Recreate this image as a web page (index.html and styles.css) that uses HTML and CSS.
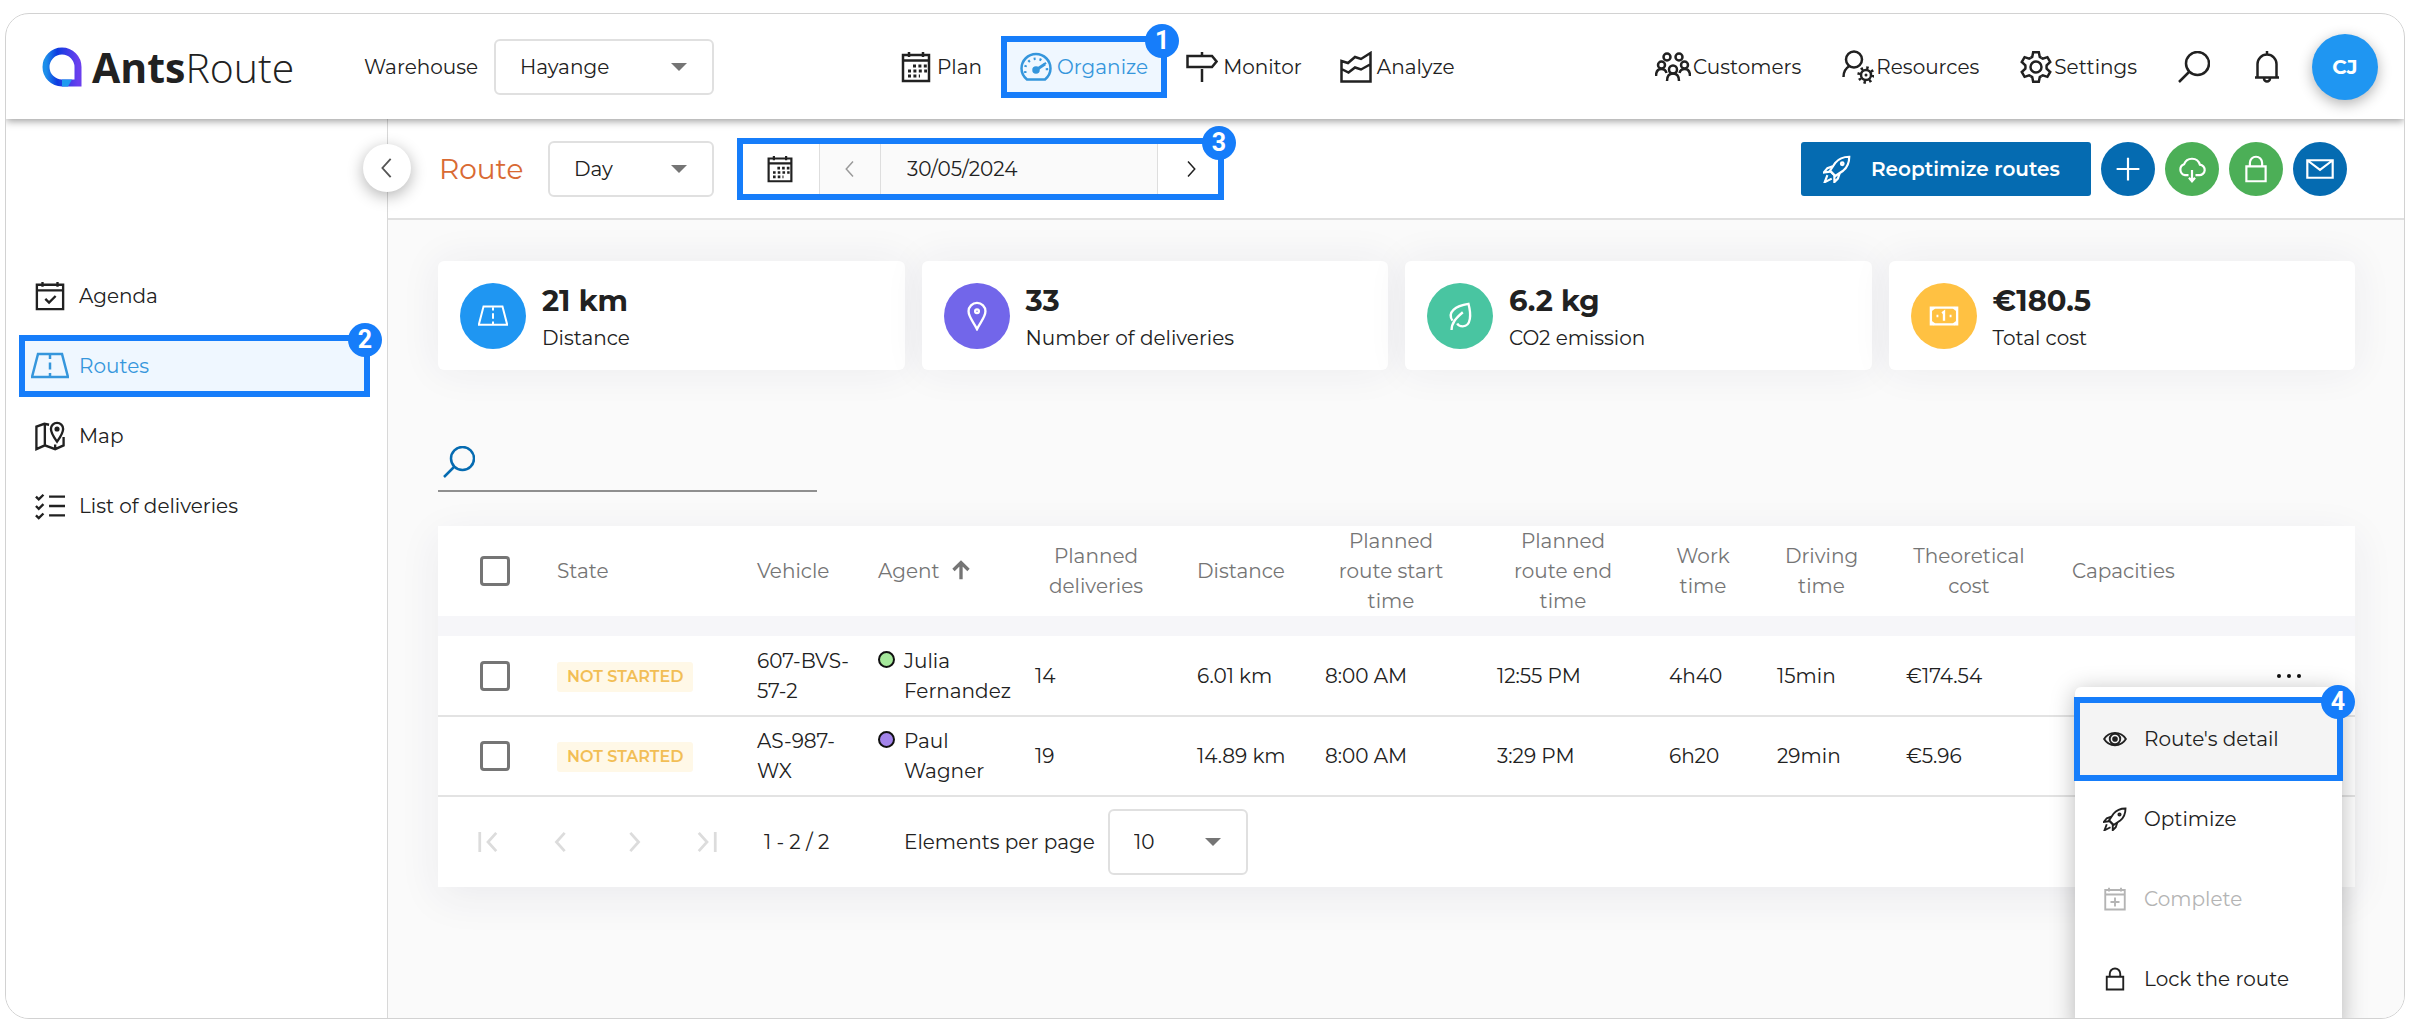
FILE: index.html
```html
<!DOCTYPE html>
<html lang="en">
<head>
    <meta charset="UTF-8">
    <meta name="viewport" content="width=device-width, initial-scale=1.0">
    <title>AntsRoute - Routes</title>
    <link rel="stylesheet" href="styles.css">
</head>
<body>
    <!-- Icon set -->
    <svg class="sprite" aria-hidden="true">
        <symbol id="i-calendar" viewBox="0 0 32 32">
            <path d="M3 4h26v26H3zM3 9.500h26M9 1v5M23 1v5"/>
            <path d="M13 15h14M8 20h19M8 25h12" stroke-width="3" stroke-dasharray="3 2.4"/>
        </symbol>
        <symbol id="i-gauge" viewBox="0 0 32 32">
            <path d="M7 28.500h18C28 26 30.500 22 30.500 17.500a14.500 14.500 0 0 0-29 0C1.500 22 4 26 7 28.500z"/>
            <path d="M5.500 22a11 11 0 1 1 21 0" stroke-dasharray="2 4"/>
            <circle cx="16" cy="19" r="2.500" fill="currentColor"/>
            <path d="M16 19l9-6" stroke-width="3"/>
        </symbol>
        <symbol id="i-sign" viewBox="0 0 32 32">
            <path d="M1.500 5H26l4.500 5.500L26 16H1.500zM16 1v4M16 18v13"/>
        </symbol>
        <symbol id="i-chart" viewBox="0 0 32 32">
            <path d="M1.500 30.500V10L8 12l7-6 6 2 9.500-6v28.500zM1.500 18l7 3.500 6.500-5 6 2 9-5"/>
        </symbol>
        <symbol id="i-group" viewBox="0 0 36 32">
            <circle cx="12" cy="6" r="3.500"/><circle cx="24" cy="6" r="3.500"/>
            <circle cx="6.500" cy="14" r="3.500"/><circle cx="29.500" cy="14" r="3.500"/>
            <circle cx="18" cy="18.500" r="4"/>
            <path d="M1 25c0-5 2-7 5.500-7s4.500 2 5 4M35 25c0-5-2-7-5.500-7s-4.500 2-5 4M12 30c0-5 2-7.500 6-7.500s6 2.500 6 7.500"/>
        </symbol>
        <symbol id="i-user" viewBox="0 0 32 34">
            <circle cx="12" cy="9.500" r="8"/>
            <path d="M1.500 27c0-5 2.500-9 6-11"/>
            <circle cx="24" cy="25" r="5"/>
            <circle cx="24" cy="25" r="7.200" stroke-width="3" stroke-dasharray="2.400 3.255"/>
            <circle cx="24" cy="25" r="1.500" fill="currentColor" stroke="none"/>
        </symbol>
        <symbol id="i-gear" viewBox="0 0 32 32">
            <path id="tooth" d="M10.700 6.900L12.200 5.900 13.200 1.200H18.800L19.800 5.900 21.300 6.900"/>
            <use href="#tooth" transform="rotate(60 16 16)"/>
            <use href="#tooth" transform="rotate(120 16 16)"/>
            <use href="#tooth" transform="rotate(180 16 16)"/>
            <use href="#tooth" transform="rotate(240 16 16)"/>
            <use href="#tooth" transform="rotate(300 16 16)"/>
            <circle cx="16" cy="16" r="5.500"/>
        </symbol>
        <symbol id="i-search" viewBox="0 0 32 32">
            <circle cx="19.500" cy="12.500" r="11.500"/>
            <path d="M11.500 20.500L1 31"/>
        </symbol>
        <symbol id="i-bell" viewBox="0 0 32 32">
            <path d="M4 26.500h24M6.500 26V13a9.500 9.500 0 0 1 19 0v13M16 0v4M13 27.500a3 3 0 0 0 6 0"/>
        </symbol>
        <symbol id="i-rocket" viewBox="0 0 32 32">
            <path d="M30 2c-7 0-12 2-16 7l-6 9 6 6 9-6c5-4 7-9 7-16z"/>
            <path d="M11 13l-6 2-4 5 7-1M19 21l-2 6-4 4v-7M5 23l-3 8 8-4M8 18l6 6"/>
            <circle cx="22" cy="10" r="1.500"/>
        </symbol>
        <symbol id="i-plus" viewBox="0 0 32 32"><path d="M16 3v26M3 16h26"/></symbol>
        <symbol id="i-cloud" viewBox="0 0 32 32">
            <path d="M12 23H8a6.500 6.500 0 0 1-1-12.500A9.500 9.500 0 0 1 25 11a6 6 0 0 1-1 12h-4M16 17v12M12.500 26l3.500 4 3.500-4"/>
        </symbol>
        <symbol id="i-lock" viewBox="0 0 32 32">
            <path d="M5 13h22v17H5zM9 13V9a7 7 0 0 1 14 0v4"/>
        </symbol>
        <symbol id="i-mail" viewBox="0 0 32 32">
            <path d="M1.500 6h29v20h-29zM1.500 6L16 17 30.500 6"/>
        </symbol>
        <symbol id="i-agenda" viewBox="0 0 32 32">
            <path d="M2 4h28v26H2zM2 10h28M8 1v5M24 1v5M11 19l4 4 7-7"/>
        </symbol>
        <symbol id="i-complete" viewBox="0 0 32 32">
            <path d="M3 4h26v26H3zM3 10h26M8 1v5M24 1v5M16 14v12M10 20h12"/>
        </symbol>
        <symbol id="i-road" viewBox="0 0 38 32">
            <path d="M7 4h24l6 23H1z"/>
            <path d="M19 5v4M19 12.500v7M19 23v3"/>
        </symbol>
        <symbol id="i-map" viewBox="0 0 32 32">
            <path d="M15 4L10 3 1.500 6v24l9-4 11 4 9-4V17M10.500 4v22M21.500 25v5"/>
            <path d="M23.500 22C20 17 17 13 17 8.500a6.500 6.500 0 0 1 13 0C30 13 27 17 23.500 22z"/>
            <circle cx="23.500" cy="8.500" r="1.500" fill="currentColor"/>
        </symbol>
        <symbol id="i-list" viewBox="0 0 32 32">
            <path d="M15 6h17M15 16h17M15 26h17M1 6l3 3 5-5M1 16l3 3 5-5M1 26l3 3 5-5"/>
        </symbol>
        <symbol id="i-pin" viewBox="0 0 32 32">
            <path d="M16 30C12 22 7 17 7 11a9 9 0 0 1 18 0c0 6-5 11-9 19z"/>
            <circle cx="16" cy="11" r="2"/>
        </symbol>
        <symbol id="i-leaf" viewBox="0 0 32 32">
            <path d="M8 21C2 12 11 5 25 3c3 11 3 24-6 24-3 0-5-1-6-3M7 31c0-8 5-13 12-19"/>
        </symbol>
        <symbol id="i-note" viewBox="0 0 32 32">
            <path d="M2 7h28v18H2z"/>
            <path d="M6 7l-4 3M26 7l4 3M6 25l-4-3M26 25l4-3M14 13l2-1.500V21M8 16h2M22 16h2"/>
        </symbol>
        <symbol id="i-eye" viewBox="0 0 32 32">
            <path d="M1.500 16C8 5 24 5 30.500 16 24 27 8 27 1.500 16z"/>
            <circle cx="16" cy="16" r="7"/>
            <circle cx="16" cy="16" r="2.500" fill="currentColor"/>
        </symbol>
        <symbol id="i-prev" viewBox="0 0 24 24"><path d="M16 2L7 12l9 10"/></symbol>
        <symbol id="i-next" viewBox="0 0 24 24"><path d="M8 2l9 10-9 10"/></symbol>
        <symbol id="i-first" viewBox="0 0 24 24"><path d="M3 1v22M21 2l-9 10 9 10"/></symbol>
        <symbol id="i-last" viewBox="0 0 24 24"><path d="M21 1v22M3 2l9 10-9 10"/></symbol>
        <symbol id="i-up" viewBox="0 0 24 24"><path d="M12 23V3M3 12l9-9 9 9"/></symbol>
    </svg>

    <div class="app">
        <header class="topbar">
            <a class="brand" href="#">
                <svg class="brand-mark" viewBox="0 0 40 40">
                    <defs>
                        <linearGradient id="brand-fill" x1="0" y1="0" x2="1" y2="0">
                            <stop offset="0" stop-color="#1d8fea"/>
                            <stop offset="0.35" stop-color="#0d3be0"/>
                            <stop offset="1" stop-color="#6a3fee"/>
                        </linearGradient>
                    </defs>
                    <path d="M36 36H20A16 16 0 1 1 36 20z" fill="none" stroke="url(#brand-fill)" stroke-width="7"/>
                    <path d="M20 39.500V32.500H30L26 39.500z" fill="#1f9bf0"/>
                </svg>
                <span class="brand-name"><b>Ants</b>Route</span>
            </a>

            <label class="warehouse-label" for="warehouse">Warehouse</label>
            <div class="select select-warehouse">
                <select id="warehouse"><option>Hayange</option></select>
            </div>

            <nav class="main-nav">
                <a href="#"><svg class="icon"><use href="#i-calendar"/></svg>Plan</a>
                <a href="#" class="active"><svg class="icon"><use href="#i-gauge"/></svg>Organize<span class="callout"><span class="badge">1</span></span></a>
                <a href="#"><svg class="icon"><use href="#i-sign"/></svg>Monitor</a>
                <a href="#"><svg class="icon"><use href="#i-chart"/></svg>Analyze</a>
            </nav>

            <div class="user-nav">
                <a href="#"><svg class="icon icon-wide"><use href="#i-group"/></svg>Customers</a>
                <a href="#"><svg class="icon icon-tall"><use href="#i-user"/></svg>Resources</a>
                <a href="#"><svg class="icon"><use href="#i-gear"/></svg>Settings</a>
                <button type="button" aria-label="Search"><svg class="icon"><use href="#i-search"/></svg></button>
                <button type="button" aria-label="Notifications"><svg class="icon"><use href="#i-bell"/></svg></button>
                <button type="button" class="avatar">CJ</button>
            </div>
        </header>

        <div class="body">
            <aside class="sidebar">
                <button type="button" class="collapse" aria-label="Collapse menu"><svg class="icon icon-small"><use href="#i-prev"/></svg></button>
                <a href="#"><svg class="icon"><use href="#i-agenda"/></svg>Agenda</a>
                <a href="#" class="active"><svg class="icon icon-road"><use href="#i-road"/></svg>Routes<span class="callout"><span class="badge">2</span></span></a>
                <a href="#"><svg class="icon"><use href="#i-map"/></svg>Map</a>
                <a href="#"><svg class="icon"><use href="#i-list"/></svg>List of deliveries</a>
            </aside>

            <main class="main">
                <div class="toolbar">
                    <h1>Route</h1>
                    <div class="select select-period">
                        <select aria-label="Period"><option>Day</option></select>
                    </div>
                    <div class="date-picker">
                        <button type="button" aria-label="Open calendar"><svg class="icon"><use href="#i-calendar"/></svg></button>
                        <button type="button" class="prev" aria-label="Previous day"><svg class="icon icon-small"><use href="#i-prev"/></svg></button>
                        <input type="text" value="30/05/2024" aria-label="Date">
                        <button type="button" aria-label="Next day"><svg class="icon icon-small"><use href="#i-next"/></svg></button>
                        <span class="callout"><span class="badge">3</span></span>
                    </div>
                    <div class="actions">
                        <button type="button" class="btn-primary"><svg class="icon"><use href="#i-rocket"/></svg>Reoptimize routes</button>
                        <button type="button" class="round blue" aria-label="Add"><svg class="icon"><use href="#i-plus"/></svg></button>
                        <button type="button" class="round green" aria-label="Export"><svg class="icon"><use href="#i-cloud"/></svg></button>
                        <button type="button" class="round green" aria-label="Lock"><svg class="icon"><use href="#i-lock"/></svg></button>
                        <button type="button" class="round blue" aria-label="Send"><svg class="icon"><use href="#i-mail"/></svg></button>
                    </div>
                </div>

                <div class="content">
                    <section class="stats">
                        <div class="stat">
                            <span class="stat-icon distance"><svg class="icon"><use href="#i-road"/></svg></span>
                            <div><strong>21 km</strong><span>Distance</span></div>
                        </div>
                        <div class="stat">
                            <span class="stat-icon deliveries"><svg class="icon"><use href="#i-pin"/></svg></span>
                            <div><strong>33</strong><span>Number of deliveries</span></div>
                        </div>
                        <div class="stat">
                            <span class="stat-icon emission"><svg class="icon"><use href="#i-leaf"/></svg></span>
                            <div><strong>6.2 kg</strong><span>CO2 emission</span></div>
                        </div>
                        <div class="stat">
                            <span class="stat-icon cost"><svg class="icon"><use href="#i-note"/></svg></span>
                            <div><strong>€180.5</strong><span>Total cost</span></div>
                        </div>
                    </section>

                    <div class="search">
                        <label for="search"><svg class="icon"><use href="#i-search"/></svg></label>
                        <input type="text" id="search" aria-label="Search routes">
                    </div>

                    <div class="routes">
                        <table>
                            <colgroup>
                                <col class="c-check"><col class="c-state"><col class="c-vehicle"><col class="c-agent">
                                <col class="c-deliveries"><col class="c-distance"><col class="c-start"><col class="c-end">
                                <col class="c-work"><col class="c-driving"><col class="c-cost"><col class="c-capacities"><col>
                            </colgroup>
                            <thead>
                                <tr>
                                    <th class="check"><input type="checkbox" aria-label="Select all"></th>
                                    <th class="left">State</th>
                                    <th class="left">Vehicle</th>
                                    <th class="left">Agent <svg class="icon sort"><use href="#i-up"/></svg></th>
                                    <th>Planned deliveries</th>
                                    <th class="left">Distance</th>
                                    <th>Planned route start time</th>
                                    <th>Planned route end time</th>
                                    <th>Work time</th>
                                    <th>Driving time</th>
                                    <th>Theoretical cost</th>
                                    <th class="left">Capacities</th>
                                    <th></th>
                                </tr>
                            </thead>
                            <tbody>
                                <tr>
                                    <td class="check"><input type="checkbox" aria-label="Select route 1"></td>
                                    <td><span class="status">NOT STARTED</span></td>
                                    <td class="narrow">607-BVS-57-2</td>
                                    <td class="narrow"><div class="agent"><i class="dot julia"></i><span>Julia Fernandez</span></div></td>
                                    <td>14</td>
                                    <td class="nowrap">6.01 km</td>
                                    <td>8:00 AM</td>
                                    <td>12:55 PM</td>
                                    <td>4h40</td>
                                    <td>15min</td>
                                    <td>€174.54</td>
                                    <td></td>
                                    <td class="more">
                                        <button type="button" class="dots" aria-label="More actions"><i></i><i></i><i></i></button>
                                        <div class="menu">
                                            <button type="button" class="active"><svg class="icon"><use href="#i-eye"/></svg>Route's detail<span class="callout"><span class="badge">4</span></span></button>
                                            <button type="button"><svg class="icon"><use href="#i-rocket"/></svg>Optimize</button>
                                            <button type="button" disabled><svg class="icon"><use href="#i-complete"/></svg>Complete</button>
                                            <button type="button"><svg class="icon"><use href="#i-lock"/></svg>Lock the route</button>
                                        </div>
                                    </td>
                                </tr>
                                <tr>
                                    <td class="check"><input type="checkbox" aria-label="Select route 2"></td>
                                    <td><span class="status">NOT STARTED</span></td>
                                    <td class="narrow">AS-987-WX</td>
                                    <td class="narrow"><div class="agent"><i class="dot paul"></i><span>Paul Wagner</span></div></td>
                                    <td>19</td>
                                    <td class="nowrap">14.89 km</td>
                                    <td>8:00 AM</td>
                                    <td>3:29 PM</td>
                                    <td>6h20</td>
                                    <td>29min</td>
                                    <td>€5.96</td>
                                    <td></td>
                                    <td></td>
                                </tr>
                            </tbody>
                        </table>

                        <div class="pager">
                            <div class="pager-buttons">
                                <button type="button" disabled aria-label="First page"><svg class="icon"><use href="#i-first"/></svg></button>
                                <button type="button" disabled aria-label="Previous page"><svg class="icon"><use href="#i-prev"/></svg></button>
                                <button type="button" disabled aria-label="Next page"><svg class="icon"><use href="#i-next"/></svg></button>
                                <button type="button" disabled aria-label="Last page"><svg class="icon"><use href="#i-last"/></svg></button>
                            </div>
                            <span class="range">1 - 2 / 2</span>
                            <label for="page-size">Elements per page</label>
                            <div class="select select-size">
                                <select id="page-size"><option>10</option></select>
                            </div>
                        </div>
                    </div>
                </div>
            </main>
        </div>
    </div>
</body>
</html>
```
FILE: styles.css
```css
* {
    box-sizing: border-box;
}

body {
    margin: 0;
    padding: 13px 5px;
    background: #fff;
    color: #212121;
    font-family: Montserrat, Inter, 'Open Sans', sans-serif;
    font-size: 20px;
    line-height: 30px;
}

a {
    color: inherit;
    text-decoration: none;
}

button, input, select {
    font: inherit;
    color: inherit;
    margin: 0;
    padding: 0;
    border: none;
    background: none;
}

.sprite {
    display: none;
}

.icon {
    width: 32px;
    height: 32px;
    flex-shrink: 0;
    fill: none;
    stroke: currentColor;
    stroke-width: 2.5;
}

.icon-small {
    width: 22px;
    height: 22px;
    stroke-width: 2;
}

.app {
    display: flex;
    flex-direction: column;
    min-height: calc(100vh - 26px);
    max-height: calc(100vh - 26px);
    border: 1px solid #d2d2d2;
    border-radius: 24px;
    overflow: hidden;
}

/* Numbered frames */
.callout {
    position: absolute;
    inset: 0;
    border: 6px solid #167dfa;
    pointer-events: none;
}

.badge {
    position: absolute;
    top: -18px;
    right: -18px;
    width: 34px;
    height: 34px;
    border-radius: 50%;
    background: #167dfa;
    color: #fff;
    font: bold 25px/34px 'Liberation Sans Narrow', Roboto, sans-serif;
    text-align: center;
}

/* Selects */
.select {
    position: relative;
    height: 56px;
}

.select select {
    width: 100%;
    height: 100%;
    padding: 0 24px;
    border: 2px solid #e0e0e0;
    border-radius: 6px;
    background: #fff;
    appearance: none;
}

.select::after {
    content: "";
    position: absolute;
    top: 24px;
    right: 27px;
    border: 8px solid transparent;
    border-top-color: #757575;
    border-bottom: none;
    pointer-events: none;
}

.select-warehouse {
    width: 220px;
}

.select-period {
    width: 166px;
}

.select-size {
    width: 140px;
    height: 66px;
}

.select-size::after {
    top: 29px;
}

/* Top bar */
.topbar {
    position: relative;
    z-index: 2;
    display: flex;
    align-items: center;
    height: 105px;
    padding: 0 26px 0 36px;
    background: #fff;
    box-shadow: 0 2px 8px rgba(0, 0, 0, 0.4);
}

.brand {
    display: flex;
    align-items: center;
    gap: 10px;
    width: 322px;
}

.brand-mark {
    width: 40px;
    height: 40px;
}

.brand-name {
    font-family: 'Open Sans', 'Noto Sans', sans-serif;
    font-size: 41px;
    font-weight: 300;
    line-height: 48px;
}

.brand-name b {
    font-weight: 700;
}

.warehouse-label {
    width: 130px;
}

.main-nav {
    display: flex;
    margin-left: 167px;
}

.main-nav a {
    position: relative;
    display: flex;
    align-items: center;
    gap: 5px;
    height: 62px;
    padding: 0 19px;
}

.main-nav .active, .sidebar .active {
    background: #eff7ff;
    color: #3596dc;
}

.user-nav {
    display: flex;
    align-items: center;
    gap: 41px;
    margin-left: auto;
}

.user-nav a {
    display: flex;
    align-items: center;
    gap: 2px;
}

.user-nav button {
    display: flex;
}

.icon-wide {
    width: 36px;
}

.icon-tall {
    height: 36px;
}

.user-nav .avatar {
    justify-content: center;
    align-items: center;
    width: 66px;
    height: 66px;
    margin-left: -12px;
    border-radius: 50%;
    background: #1f96f2;
    color: #fff;
    font-weight: bold;
    box-shadow: 0 4px 14px rgba(0, 0, 0, 0.3);
}

/* Sidebar */
.body {
    display: flex;
    flex: 1;
    min-height: 0;
}

.sidebar {
    position: relative;
    z-index: 1;
    display: flex;
    flex-direction: column;
    gap: 8px;
    width: 382px;
    flex-shrink: 0;
    padding: 146px 17px 0 13px;
    border-right: 1px solid #d8d8d8;
    background: #fff;
}

.sidebar a {
    position: relative;
    display: flex;
    align-items: center;
    gap: 13px;
    height: 62px;
    padding-left: 15px;
}

.sidebar a .icon {
    width: 32px;
    height: 30px;
}

.sidebar a .icon-road {
    width: 38px;
    height: 32px;
    margin: 0 -3px;
}

.collapse {
    position: absolute;
    top: 25px;
    right: -24px;
    display: flex;
    justify-content: center;
    align-items: center;
    width: 48px;
    height: 48px;
    border-radius: 50%;
    background: #fff;
    color: #555;
    box-shadow: 0 4px 16px rgba(0, 0, 0, 0.3);
}

/* Toolbar */
.main {
    flex: 1;
    min-width: 0;
    background: #fafafa;
}

.toolbar {
    display: flex;
    align-items: center;
    height: 101px;
    padding: 0 57px 0 51px;
    border-bottom: 2px solid #e0e0e0;
    background: #fff;
}

h1 {
    width: 109px;
    margin: 0;
    color: #d96a33;
    font-size: 28px;
    font-weight: normal;
}

.date-picker {
    position: relative;
    display: flex;
    width: 487px;
    height: 62px;
    margin-left: 23px;
}

.date-picker button {
    display: flex;
    justify-content: center;
    align-items: center;
    width: 66px;
}

.date-picker button:first-child {
    width: 82px;
    padding-left: 4px;
}

.date-picker .icon {
    width: 28px;
    height: 28px;
}

.date-picker .icon-small {
    width: 18px;
    height: 18px;
}

.date-picker .prev {
    width: 62px;
    border: 1px solid #dedede;
    background: #fafafa;
    color: #9a9a9a;
}

.date-picker input {
    flex: 1;
    min-width: 0;
    padding-left: 26px;
    border-right: 1px solid #dedede;
    background: #fafafa;
}

.actions {
    display: flex;
    align-items: center;
    gap: 10px;
    margin-left: auto;
}

.btn-primary {
    display: flex;
    align-items: center;
    gap: 20px;
    width: 290px;
    height: 54px;
    padding-left: 22px;
    border-radius: 3px;
    background: #056bb1;
    color: #fff;
    font-weight: 600;
}

.btn-primary .icon {
    width: 28px;
    height: 28px;
}

.round {
    display: flex;
    justify-content: center;
    align-items: center;
    width: 54px;
    height: 54px;
    border-radius: 50%;
    color: #fff;
}

.round .icon {
    width: 28px;
    height: 28px;
}

.blue {
    background: #056bb1;
}

.green {
    background: #4caf57;
}

/* Figures */
.content {
    padding: 41px 49px 0 50px;
}

.stats {
    display: grid;
    grid-template-columns: repeat(4, 1fr);
    gap: 17px;
}

.stat {
    display: flex;
    align-items: center;
    gap: 16px;
    height: 109px;
    padding-left: 22px;
    border-radius: 6px;
    background: #fff;
    box-shadow: 0 0 40px rgba(40, 40, 90, 0.07);
}

.stat strong, .stat span {
    display: block;
}

.stat strong {
    font-size: 29px;
    font-weight: 700;
    line-height: 44px;
}

.stat .stat-icon {
    display: flex;
    justify-content: center;
    align-items: center;
    width: 66px;
    height: 66px;
    border-radius: 50%;
    color: #fff;
}

.distance {
    background: #1f96f2;
}

.deliveries {
    background: #7266ea;
}

.emission {
    background: #49c5a1;
}

.cost {
    background: #ffc142;
}

.stat .icon {
    width: 30px;
    height: 30px;
}

.search {
    display: flex;
    align-items: center;
    width: 379px;
    margin-top: 66px;
    padding: 10px 0 12px 5px;
    border-bottom: 2px solid #8f8f8f;
}

.search label {
    display: flex;
    color: #056bb1;
}

.search input {
    flex: 1;
    min-width: 0;
    padding-left: 12px;
    outline: none;
}

/* Routes table */
.routes {
    margin-top: 34px;
    background: #f6f6f9;
    box-shadow: 0 10px 40px rgba(40, 40, 90, 0.07);
}

table {
    width: 100%;
    table-layout: fixed;
    border-collapse: collapse;
}

.c-check { width: 119px; }
.c-state { width: 200px; }
.c-vehicle { width: 121px; }
.c-agent { width: 157px; }
.c-deliveries { width: 162px; }
.c-distance { width: 128px; }
.c-start, .c-end { width: 172px; }
.c-work { width: 108px; }
.c-driving { width: 129px; }
.c-cost { width: 166px; }
.c-capacities { width: 150px; }

thead {
    background: #fff;
}

th {
    height: 90px;
    padding: 0 40px 0 0;
    color: #757575;
    font-weight: normal;
}

th.left {
    padding-right: 0;
    text-align: left;
    white-space: nowrap;
}

.sort {
    width: 20px;
    height: 20px;
    margin-left: 6px;
    stroke-width: 4;
    vertical-align: -2px;
}

tbody::before {
    content: "";
    display: block;
    height: 20px;
}

tbody tr {
    background: #fff;
    border-bottom: 2px solid #e3e3e3;
}

td {
    height: 80px;
    padding: 0 40px 0 0;
}

td.narrow {
    padding-right: 24px;
}

td.nowrap {
    padding-right: 0;
    white-space: nowrap;
}

.check {
    padding: 0 0 0 42px;
    text-align: left;
}

.check input {
    display: block;
    width: 30px;
    height: 30px;
    border: 3px solid #757575;
    border-radius: 4px;
    appearance: none;
}

.status {
    display: inline-block;
    padding: 0 10px;
    border-radius: 3px;
    background: #fff8e7;
    color: #f2be55;
    font-size: 16px;
    font-weight: 600;
    white-space: nowrap;
}

.agent {
    display: flex;
    gap: 9px;
}

.dot {
    width: 17px;
    height: 17px;
    flex-shrink: 0;
    margin-top: 5px;
    border: 2px solid #111;
    border-radius: 50%;
}

.julia {
    background: #a5e89b;
}

.paul {
    background: #a384ea;
}

.more {
    position: relative;
    padding-right: 54px;
}

.dots {
    display: flex;
    gap: 6px;
    margin-left: auto;
}

.dots i {
    width: 4px;
    height: 4px;
    border-radius: 50%;
    background: #111;
}

.menu {
    position: absolute;
    top: 51px;
    right: 13px;
    z-index: 1;
    width: 267px;
    padding: 12px 0;
    border-radius: 6px;
    background: #fff;
    box-shadow: 0 4px 24px rgba(0, 0, 0, 0.28);
}

.menu button {
    position: relative;
    display: flex;
    align-items: center;
    gap: 17px;
    width: 100%;
    height: 80px;
    padding-left: 28px;
}

.menu .icon {
    width: 24px;
    height: 24px;
}

.menu .active {
    background: #f4f4f4;
}

.menu .callout {
    inset: -2px -1px;
}

.menu button:disabled {
    color: #b4b4b4;
}

/* Pagination */
.pager {
    display: flex;
    align-items: center;
    height: 90px;
    padding-left: 38px;
    background: #fff;
}

.pager-buttons {
    display: flex;
    gap: 49px;
    width: 288px;
}

.pager-buttons button {
    display: flex;
    color: #dcdcdc;
}

.pager-buttons .icon {
    width: 24px;
    height: 22px;
    stroke-width: 3;
}

.range {
    width: 140px;
}

.pager label {
    width: 204px;
}
```
